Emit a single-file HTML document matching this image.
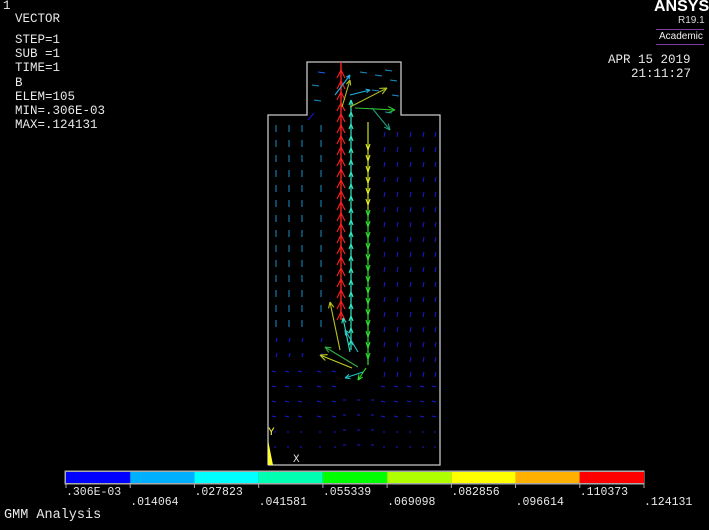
<!DOCTYPE html>
<html><head><meta charset="utf-8"><style>
html,body{margin:0;padding:0;background:#000;width:709px;height:530px;overflow:hidden;position:relative}
.t{position:absolute;color:#e8e8e8;font-family:"Liberation Mono",monospace;font-size:12.5px;line-height:12px;white-space:pre}
</style></head><body>
<div class="t" style="left:3px;top:0px">1</div>
<div class="t" style="left:15px;top:13px">VECTOR</div>
<div class="t" style="left:15px;top:34px">STEP=1</div>
<div class="t" style="left:15px;top:48px">SUB =1</div>
<div class="t" style="left:15px;top:62px">TIME=1</div>
<div class="t" style="left:15px;top:77px">B</div>
<div class="t" style="left:15px;top:91px">ELEM=105</div>
<div class="t" style="left:15px;top:105px">MIN=.306E-03</div>
<div class="t" style="left:15px;top:119px">MAX=.124131</div>
<div style="position:absolute;left:654px;top:-2px;color:#fff;font:bold 16px 'Liberation Sans',sans-serif">ANSYS</div>
<div style="position:absolute;left:678px;top:15px;color:#ddd;font:10px 'Liberation Sans',sans-serif">R19.1</div>
<div style="position:absolute;left:656px;top:29px;width:48px;height:1px;background:#7a3fa0"></div>
<div style="position:absolute;left:659px;top:31px;color:#eee;font:10px 'Liberation Sans',sans-serif">Academic</div>
<div style="position:absolute;left:656px;top:44px;width:48px;height:1px;background:#7a3fa0"></div>
<div class="t" style="left:608px;top:54px">APR 15 2019</div>
<div class="t" style="left:631px;top:68px">21:11:27</div>
<div class="t" style="left:4px;top:510px;font-size:13.5px">GMM Analysis</div>
<svg id="s" width="709" height="530" style="position:absolute;left:0;top:0">
<polyline points="268,465 268,115 307,115 307,62 401,62 401,115 440,115 440,465 268,465" fill="none" stroke="#c8c8c8" stroke-width="1.3"/>
<polygon points="268,465 268,440 273,465" fill="#ffff30"/>
<text x="268" y="435" fill="#ffff40" font-family="Liberation Mono" font-size="11">Y</text>
<text x="293" y="462" fill="#ddd" font-family="Liberation Mono" font-size="11">X</text>
<g id="g"></g>
<rect x="65.5" y="471.5" width="578" height="12" fill="none" stroke="#aaa" stroke-width="2"/>
<g id="bar"></g>
</svg>
<script>
var g=document.getElementById('g'),b=document.getElementById('bar'),h='';
function ln(x1,y1,x2,y2,c,w){h+='<line x1="'+x1+'" y1="'+y1+'" x2="'+x2+'" y2="'+y2+'" stroke="'+c+'" stroke-width="'+(w||1.1)+'"/>';}
function ar(x1,y1,x2,y2,c,hs){ln(x1,y1,x2,y2,c);var dx=x2-x1,dy=y2-y1,L=Math.hypot(dx,dy)||1;dx/=L;dy/=L;hs=hs||Math.min(6,L*0.3);
ln(x2,y2,x2-hs*dx+hs*0.45*dy,y2-hs*dy-hs*0.45*dx,c);ln(x2,y2,x2-hs*dx-hs*0.45*dy,y2-hs*dy+hs*0.45*dx,c);}
var cols=[276,289,302,321,336,385,398,411,424,436];
for(var y=132;y<460;y+=15){for(var i=0;i<cols.length;i++){var x=cols[i];
 if(x>330&&x<378&&y<370)continue;
 var c='#1818d8',dx=0,dy=-4;
 if(x<325&&y<340){c='#1890c8';dx=0;dy=-7;}
 else if(x>380&&y<380){dx=-1;dy=5;}
 else if(y>370){dx=-4;dy=-1;if(y>420){dx=-2;dy=0;}}
 else if(y>330){dx=1;dy=-4;}
 ln(x,y,x+dx,y+dy,c,1);}}
for(var x=346;x<380;x+=14){for(var y=400;y<460;y+=15){ln(x,y,x-3,y,'#1818d8',1);}}
var tp=[[318,72,'#1a60ff'],[312,85,'#1890c8'],[314,100,'#1890c8'],[360,72,'#1890c8'],[375,75,'#1890c8'],[385,70,'#1890c8'],[390,80,'#1890c8'],[372,90,'#1890c8'],[392,95,'#1890c8'],[385,112,'#1890c8']];
tp.forEach(function(p){ln(p[0],p[1],p[0]+7,p[1]+1,p[2],1);});
ln(308,120,314,113,'#1818d8',1);
ln(341,62,341,320,'#ff2020',1.4);
for(var y=70;y<320;y+=11){ln(341,y,337,y+8,'#ff2020');ln(341,y,345,y+8,'#ff2020');}
ln(351,100,351,350,'#30e8c0',1.2);
for(var y=100;y<350;y+=12){ln(351,y,349,y+5,'#30e8c0');ln(351,y,353,y+5,'#30e8c0');}
ln(368,122,368,210,'#c8e020',1.2);ln(368,210,368,365,'#30e030',1.2);
for(var y=150;y<365;y+=11){var c=y<210?'#e0f020':'#30e030';ln(368,y,366,y-6,c);ln(368,y,370,y-6,c);}
ar(350,107,387,88,'#b0c020',7);ar(342,107,350,80,'#b0c020',5);ar(355,108,395,110,'#30c030',7);ar(372,108,390,130,'#20a080',6);
ar(335,95,350,75,'#20b0e0',4);ar(350,95,370,90,'#20b0e0',4);
ar(352,368,320,355,'#c0d020',7);ar(358,367,325,347,'#30b040',6);ar(340,350,330,302,'#c0c020',6);ar(350,352,343,318,'#30e0c0',5);
ar(358,352,345,330,'#30c0c0',5);ar(363,372,345,378,'#20c0c0',5);ar(366,368,358,380,'#30e030',5);
g.innerHTML=h;
var cs=['#0000ff','#00b0ff','#00ffff','#00ffb0','#00ff00','#b0ff00','#ffff00','#ffb000','#ff0000'];
var lb=['.306E-03','.014064','.027823','.041581','.055339','.069098','.082856','.096614','.110373','.124131'];
var s='',w=578/9;
for(var i=0;i<9;i++){s+='<rect x="'+(66+i*w)+'" y="472" width="'+w+'" height="11" fill="'+cs[i]+'"/>';}
for(var i=0;i<10;i++){var x=66+i*w;s+='<line x1="'+x+'" y1="484" x2="'+x+'" y2="488" stroke="#aaa"/>';
 s+='<text x="'+x+'" y="'+(i%2?505:495)+'" fill="#e8e8e8" font-family="Liberation Mono" font-size="11.5">'+lb[i]+'</text>';}
b.innerHTML=s;
</script>
</body></html>
